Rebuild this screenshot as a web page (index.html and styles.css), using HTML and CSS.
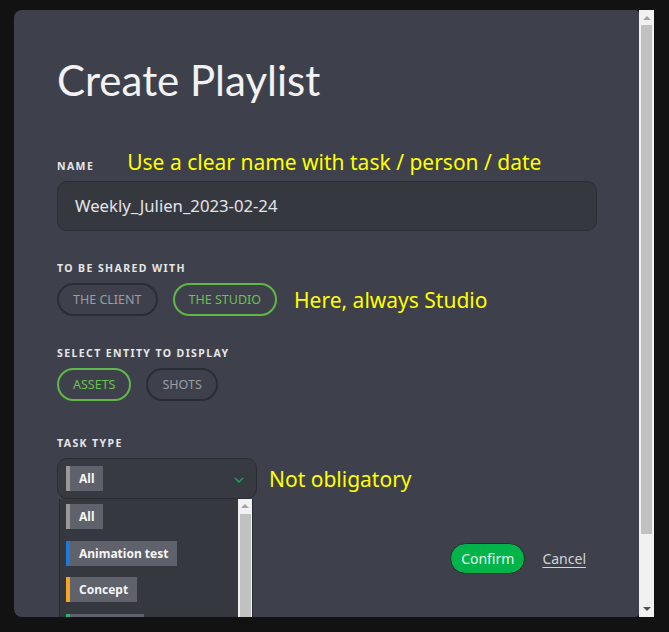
FILE: index.html
```html
<!DOCTYPE html>
<html lang="en">
<head>
<meta charset="utf-8">
<title>Create Playlist</title>
<link rel="stylesheet" href="styles.css">
</head>
<body>
<div class="frame">
  <div class="modal">
    <h1 class="title">Create Playlist</h1>

    <div class="label-row">
      <span class="label">Name</span>
      <span class="note note-name">Use a clear name with task / person / date</span>
    </div>
    <div class="input">Weekly_Julien_2023-02-24</div>

    <div class="label label-block">To be shared with</div>
    <div class="pill-row">
      <span class="pill">The client</span>
      <span class="pill pill-on">The studio</span>
      <span class="note note-pill">Here, always Studio</span>
    </div>

    <div class="label label-block">Select entity to display</div>
    <div class="pill-row">
      <span class="pill pill-on">Assets</span>
      <span class="pill">Shots</span>
    </div>

    <div class="label label-block label-task">Task type</div>
    <div class="select-row">
      <div class="select">
        <span class="tag tag-gray">All</span>
        <svg class="chevron" width="10" height="6" viewBox="0 0 10 6"><polyline points="1,1 5,5 9,1" fill="none" stroke="#1fa05a" stroke-width="1.5"/></svg>
        <div class="dropdown">
          <div class="opts">
            <div class="opt"><span class="tag tag-gray">All</span></div>
            <div class="opt"><span class="tag tag-blue">Animation test</span></div>
            <div class="opt"><span class="tag tag-orange">Concept</span></div>
            <div class="opt"><span class="tag tag-green tag-empty"></span></div>
          </div>
          <div class="mini-scroll">
            <span class="up-arrow small"></span>
            <span class="mini-thumb"></span>
          </div>
        </div>
      </div>
      <span class="note note-select">Not obligatory</span>
    </div>

    <div class="actions">
      <span class="confirm">Confirm</span>
      <span class="cancel">Cancel</span>
    </div>
  </div>
  <div class="scrollbar">
    <span class="up-arrow"></span>
    <span class="thumb"></span>
    <span class="down-arrow"></span>
  </div>
</div>
</body>
</html>
```

FILE: styles.css
```css
html, body {
  margin: 0;
  padding: 0;
}
body {
  background: #121212;
  width: 669px;
  height: 632px;
  overflow: hidden;
  font-family: "Noto Sans", "Open Sans", sans-serif;
}
.frame {
  display: flex;
  margin: 10px 0 0 14px;
  height: 607px;
}
.modal {
  width: 625px;
  height: 607px;
  box-sizing: border-box;
  background: #3e414b;
  border-radius: 8px 4px 4px 8px;
  overflow: hidden;
  padding: 0 42px 0 43px;
}
.title {
  margin: 45px 0 0 0;
  font-family: Lato, sans-serif;
  font-weight: 400;
  font-size: 42px;
  line-height: 50px;
  color: #f2f2f2;
}
.label {
  font-size: 10.5px;
  font-weight: 700;
  letter-spacing: 1.4px;
  text-transform: uppercase;
  color: #e6e6e8;
}
.label-row {
  display: flex;
  align-items: center;
  margin-top: 48px;
  height: 26px;
}
.note {
  color: #ffff00;
  font-size: 21px;
  line-height: 26px;
}
.note-name {
  margin-left: 33px;
  margin-top: -8px;
}
.input {
  margin-top: 2px;
  height: 50px;
  box-sizing: border-box;
  border: 1px solid #2c2e35;
  border-radius: 10px;
  background: #363840;
  color: #e4e4e6;
  font-size: 16.7px;
  line-height: 48px;
  padding-left: 17px;
}
.label-block {
  line-height: 14px;
}
.input + .label-block {
  margin-top: 30px;
}
.pill-row {
  display: flex;
  align-items: center;
  gap: 15px;
  margin-top: 8px;
  height: 33px;
}
.pill-row + .label-block {
  margin-top: 30px;
}
.pill {
  box-sizing: border-box;
  height: 33px;
  line-height: 29px;
  padding: 0 14px;
  border: 2px solid #2b2d34;
  border-radius: 17px;
  font-size: 12.5px;
  text-transform: uppercase;
  color: #9b9da4;
}
.pill-on {
  border-color: #5fb848;
  color: #6cc04f;
}
.note-pill {
  margin-left: 2px;
}
.label-task {
  margin-top: 35px !important;
}
.select-row {
  display: flex;
  align-items: center;
  margin-top: 8px;
}
.select {
  position: relative;
  width: 200px;
  height: 41px;
  box-sizing: border-box;
  border: 1px solid #2b2d34;
  border-radius: 10px;
  background: #383a42;
  display: flex;
  align-items: center;
  padding-left: 8px;
}
.chevron {
  position: absolute;
  right: 12px;
  top: 18px;
}
.note-select {
  margin-left: 12px;
}
.tag {
  display: inline-block;
  height: 25px;
  line-height: 25px;
  box-sizing: border-box;
  padding: 0 9px;
  background: #5f616b;
  border-left: 4px solid #999;
  color: #f6f6f6;
  font-size: 12px;
  font-weight: 700;
  vertical-align: top;
}
.tag-blue { border-left-color: #1f7ad6; }
.tag-orange { border-left-color: #f7a528; }
.tag-green { border-left-color: #22b573; }
.tag-empty { width: 78px; }
.dropdown {
  position: absolute;
  left: 1px;
  top: 40px;
  width: 194px;
  height: 140px;
  box-sizing: border-box;
  background: #363840;
  border-left: 1px solid #2a2c32;
  border-right: 1px solid #2a2c32;
  display: flex;
}
.opts {
  flex: 1;
  padding-top: 5px;
}
.opt {
  height: 36.5px;
  padding-left: 6px;
}
.mini-scroll {
  width: 14px;
  background: #f1f1f1;
  position: relative;
}
.mini-thumb {
  position: absolute;
  left: 2px;
  right: 1px;
  top: 15px;
  bottom: 0;
  background: #c1c1c1;
}
.up-arrow {
  position: absolute;
  left: 50%;
  top: 6px;
  margin-left: -4px;
  width: 0;
  height: 0;
  border-left: 4px solid transparent;
  border-right: 4px solid transparent;
  border-bottom: 4px solid #a3a3a3;
}
.up-arrow.small {
  top: 5px;
}
.actions {
  display: flex;
  justify-content: flex-end;
  align-items: center;
  margin-top: 44px;
  padding-right: 11px;
  gap: 17px;
}
.confirm {
  height: 31px;
  box-sizing: border-box;
  line-height: 29px;
  padding: 0 10px;
  background: #00b44a;
  border: 1px solid #2a2c32;
  border-radius: 16px;
  color: #e9f6ec;
  font-size: 14px;
}
.cancel {
  color: #d2d3d6;
  font-size: 14px;
  text-decoration: underline;
  text-underline-offset: 3px;
}
.scrollbar {
  position: relative;
  width: 15px;
  height: 607px;
  background: #f1f1f1;
}
.thumb {
  position: absolute;
  left: 2px;
  right: 2px;
  top: 15px;
  height: 509px;
  background: #c1c1c1;
}
.down-arrow {
  position: absolute;
  left: 50%;
  bottom: 6px;
  margin-left: -4px;
  width: 0;
  height: 0;
  border-left: 4px solid transparent;
  border-right: 4px solid transparent;
  border-top: 4px solid #505050;
}
```
